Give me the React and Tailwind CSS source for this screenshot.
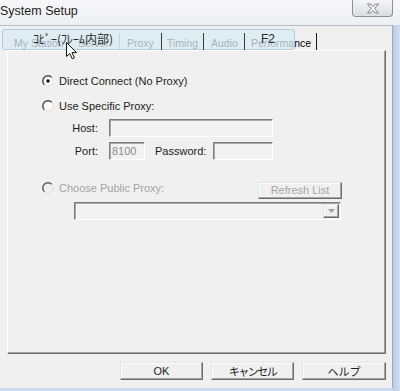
import React from 'react';

const tabs = [
  { name: 'My Station', w: 'w-[60px]', pl: 'pl-[6px]', sep: 'border-[#8a8a8a]' },
  { name: 'Server', w: 'w-[52px]', pl: 'pl-[10px]', sep: 'border-[#8a8a8a]' },
  { name: 'Proxy', w: 'w-[42px]', pl: 'pl-[7px]', sep: 'border-[#3a3a3a] relative z-20' },
  { name: 'Timing', w: 'w-[42px]', pl: 'pl-[5px]', sep: 'border-[#3a3a3a] relative z-20' },
  { name: 'Audio', w: 'w-[41px]', pl: 'pl-[7px]', sep: 'border-[#3a3a3a] relative z-20' },
  { name: 'Performance', w: 'w-[72px]', pl: 'pl-[6px]', sep: 'border-[#1a1a1a] relative z-20' },
];

const Radio = ({ checked, disabled }) => (
  <svg width="12" height="12" viewBox="0 0 12 12" className="shrink-0">
    <circle cx="6" cy="6" r="5" fill={disabled ? '#f0f0f0' : '#fbfbfb'} stroke="#e2e2e2" strokeWidth="1" />
    <path d="M2.3 9.7 A5.2 5.2 0 0 1 9.7 2.3" fill="none" stroke={disabled ? '#5a5a5a' : '#4a4a4a'} strokeWidth="1.4" />
    {checked && <circle cx="6" cy="6" r="1.7" fill="#111" />}
  </svg>
);

const Field = ({ className = '', children }) => (
  <div
    className={`h-[18px] bg-[#f2f2f2] border border-t-[#7c7c7c] border-l-[#7c7c7c] border-r-white border-b-white shadow-[inset_1px_1px_0_#a9a9a9] flex items-center ${className}`}
  >
    {children}
  </div>
);

const RaisedButton = ({ className = '', children }) => (
  <div
    className={`bg-[#f0f0f0] border border-t-[#e4e4e4] border-l-[#e4e4e4] border-r-[#6e6e6e] border-b-[#6e6e6e] shadow-[inset_-1px_-1px_0_#a4a4a4,inset_1px_1px_0_#ffffff] flex items-center justify-center ${className}`}
  >
    {children}
  </div>
);

export default function App() {
  return (
    <div className="w-[400px] h-[391px] flex flex-col bg-[#cbdaee] overflow-hidden font-['Liberation_Sans','Noto_Sans_CJK_JP',sans-serif] text-[#1c1c1c]">
      {/* Title bar */}
      <div className="h-[25px] shrink-0 flex items-start bg-gradient-to-b from-[#f6f7f9] to-[#eceff3]">
        <span className="pt-[4px] text-[12.5px] leading-[15px] text-[#1e1e1e]">System Setup</span>
        <div className="ml-auto mr-[7px] w-[41px] h-[17px] rounded-b-[4px] border border-t-0 border-[#8c9198] bg-gradient-to-b from-[#f4f5f7] to-[#d9dde2] flex items-center justify-center">
          <svg width="14" height="11" viewBox="0 0 14 11">
            <path
              d="M1.5 1 H4.5 L7 3.6 L9.5 1 H12.5 L8.6 5.5 L12.5 10 H9.5 L7 7.4 L4.5 10 H1.5 L5.4 5.5 Z"
              fill="#fafafa"
              stroke="#7b7f85"
              strokeWidth="1"
              strokeLinejoin="round"
            />
          </svg>
        </div>
      </div>

      {/* Window body */}
      <div className="flex flex-1 min-h-0">
        <div className="w-[393px] h-[363px] bg-[#f0f0f0] border-t border-r border-t-[#b9bdc2] border-r-[#a6a9ae] relative flex flex-col">
          {/* Tab strip */}
          <div className="mt-[7px] ml-[8px] h-[17px] flex items-stretch text-[10.5px] leading-[15px] text-black">
            {tabs.map((t) => (
              <div key={t.name} className={`${t.w} flex`}>
                <span className={`${t.pl} pt-[3px] flex-1 whitespace-nowrap`}>{t.name}</span>
                <span className={`w-0 border-r ${t.sep}`} />
              </div>
            ))}
          </div>

          {/* IME tooltip overlay */}
          <div className="absolute left-[2px] top-[3px] w-[293px] h-[21px] z-10 rounded-[3px] border border-[#9fc0d6]/70 bg-[#d8ebf6]/75 flex items-center pb-[2px]">
            <span className="pl-[30px] text-[12px] leading-[14px] text-[#2a2a2a] font-['Noto_Sans_CJK_JP',sans-serif]">ｺﾋﾟｰ(ﾌﾚｰﾑ内部)</span>
            <span className="ml-auto pr-[19px] text-[12px] leading-[14px] text-[#2a2a2a]">F2</span>
          </div>

          {/* Mouse cursor */}
          <svg className="absolute left-[66px] top-[16px] z-30" width="12" height="18" viewBox="0 0 12 18">
            <path d="M0.5 0.5 L0.5 14.5 L3.8 11.4 L6.2 16.8 L8.4 15.8 L6 10.6 L10.5 10.6 Z" fill="#fff" stroke="#111" strokeWidth="1" strokeLinejoin="round" />
          </svg>

          {/* Tab page */}
          <div className="ml-[7px] w-[379px] h-[304px] border border-t-white border-l-white border-r-[#6b6b6b] border-b-[#6b6b6b] shadow-[inset_-1px_-1px_0_#a0a0a0] pt-[23px] pl-[34px] text-[11px]">
            <div className="h-[14px] flex items-center gap-[5px]">
              <Radio checked />
              <span>Direct Connect (No Proxy)</span>
            </div>
            <div className="mt-[11px] h-[14px] flex items-center gap-[5px]">
              <Radio />
              <span>Use Specific Proxy:</span>
            </div>
            <div className="mt-[6px] flex items-center">
              <span className="w-[56px] text-right">Host:</span>
              <Field className="ml-[11px] w-[164px]" />
            </div>
            <div className="mt-[5px] flex items-center">
              <span className="w-[56px] text-right">Port:</span>
              <Field className="ml-[11px] w-[36px] pl-[2px] text-[#8c8c8c]">8100</Field>
              <span className="ml-[10px] w-[48px]">Password:</span>
              <Field className="ml-[10px] w-[60px]" />
            </div>
            <div className="mt-[21px] w-[300px] flex items-start">
              <div className="h-[14px] flex items-center gap-[5px]">
                <Radio disabled />
                <span className="text-[#a3a3a3]">Choose Public Proxy:</span>
              </div>
              <RaisedButton className="ml-auto mt-[1px] w-[84px] h-[17px] text-[#a6a6a6]">Refresh List</RaisedButton>
            </div>
            <Field className="mt-[3px] ml-[32px] w-[267px] justify-end pr-[1px]">
              <RaisedButton className="w-[16px] h-[14px]">
                <svg width="7" height="4" viewBox="0 0 7 4">
                  <path d="M0 0 H7 L3.5 4 Z" fill="#a0a0a0" />
                </svg>
              </RaisedButton>
            </Field>
          </div>

          {/* Dialog buttons */}
          <div className="mt-[8px] pr-[6px] flex justify-end gap-[8px] text-[11px]">
            <RaisedButton className="w-[83px] h-[18px]">OK</RaisedButton>
            <RaisedButton className="w-[83px] h-[18px] font-['Noto_Sans_CJK_JP',sans-serif] tracking-[-1.5px]">キャンセル</RaisedButton>
            <RaisedButton className="w-[84px] h-[18px] font-['Noto_Sans_CJK_JP',sans-serif]">ヘルプ</RaisedButton>
          </div>
        </div>
        <div className="flex-1 bg-gradient-to-r from-[#b9cce6] to-[#d2dff0]" />
      </div>
    </div>
  );
}
